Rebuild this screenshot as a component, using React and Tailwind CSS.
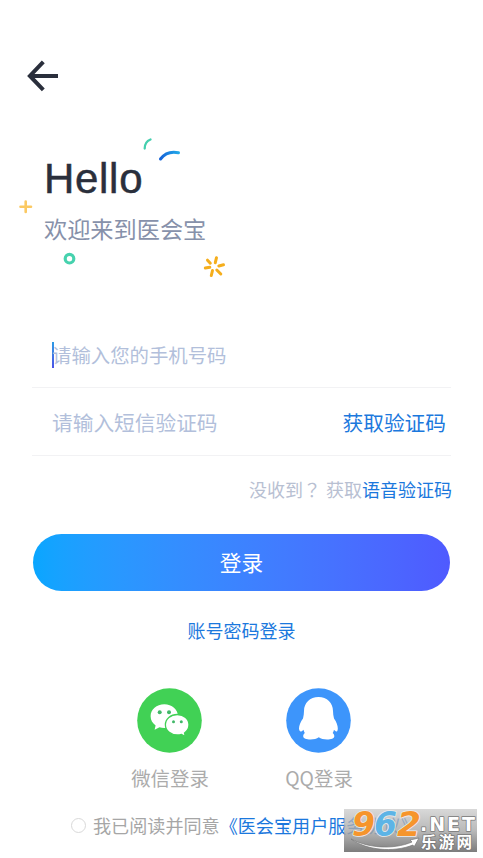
import React from "react";

const BackIcon = () => (
  <svg width="32" height="32" viewBox="0 0 32 32" fill="none" stroke="#2a2f3c" strokeWidth="4">
    <path d="M16.300 1.800 2.900 15.900l13.400 14M3 15.900H31" />
  </svg>
);

// small confetti shapes around the greeting
const Confetti = () => (
  <svg className="absolute left-0 top-0" width="240" height="160" viewBox="0 130 240 160" fill="none" strokeLinecap="round">
    <defs>
      <linearGradient id="arc" x1="160" y1="0" x2="180" y2="0" gradientUnits="userSpaceOnUse">
        <stop offset="0" stopColor="#1462d8" />
        <stop offset="1" stopColor="#22aeea" />
      </linearGradient>
    </defs>
    <path d="M144.7 148.500c0-4.500 2-7.500 5.800-9" stroke="#45cfae" strokeWidth="2.300" />
    <path d="M160.500 159c4.500-6 10-8 18-6.300" stroke="url(#arc)" strokeWidth="3" />
    <path d="M25.700 201.500v10.500M20.500 206.700h10.500" stroke="#fbc962" strokeWidth="2.600" />
    <circle cx="69.500" cy="258.700" r="4.300" stroke="#46d2ae" strokeWidth="3.200" />
    <g stroke="#f5ae1c" strokeWidth="3">
      <path d="M215.300 262.700l1.200-5M210.300 263.200l-2.800-3M218.800 266l4.700-1.200M209.800 267.300l-4.500.8M212.500 270.500l-1.200 5M216.800 270l4 4" />
    </g>
  </svg>
);

const WechatIcon = () => (
  <svg width="65" height="65" viewBox="0 0 65 65">
    <circle cx="32.500" cy="32.500" r="32.300" fill="#41d155" />
    <path d="M27.300 16.300c-7.700 0-13.700 5.300-13.700 12 0 3.800 1.900 7 5 9.200l-1 4.200 4.900-2.500c1.500.5 3.100.7 4.800.7 7.600 0 13.700-5.200 13.700-11.700s-6.100-11.900-13.700-11.900z" fill="#fff" />
    <path d="M40.300 26.500c-6.800 0-11.900 4.500-11.900 10.300s5.100 10.200 11.900 10.200c1.500 0 2.900-.2 4.200-.6l3.900 2.100-.9-3.500c2.900-2 4.500-4.800 4.500-8.200 0-5.800-5.100-10.300-11.700-10.300z" fill="#fff" stroke="#41d155" strokeWidth="1.300" />
    <g fill="#41b868">
      <circle cx="22.700" cy="24.300" r="2" />
      <circle cx="32" cy="24.300" r="2" />
      <circle cx="36.500" cy="33.700" r="1.500" />
      <circle cx="44.300" cy="33.700" r="1.500" />
    </g>
  </svg>
);

const QQIcon = () => (
  <svg width="65" height="65" viewBox="0 0 65 65">
    <circle cx="32.500" cy="32.500" r="32.300" fill="#3d95fb" />
    <path d="M32.500 9c-8.500 0-14.500 6-14.500 14 0 2.500-.4 5-1 7.500-2.500 3.500-4 7-4 10 0 1.500.8 3 1.700 3 .8 0 1.800-.8 2.800-1.800.3 1.300.7 2.400 1.300 3.400-1.100.9-1.600 2-1.600 3.200 0 2.300 3.300 3.200 7.300 3.200 3.300 0 6.300-.5 8.300-2.200 2 1.700 5 2.200 8.300 2.200 4 0 7.200-.9 7.200-3.200 0-1.200-.5-2.300-1.600-3.200.6-1 1-2.100 1.300-3.400 1 1 1.900 1.800 2.600 1.800.8 0 1.200-1.500 1.200-3 0-3-1.300-6.500-3.800-10-.6-2.500-1-5-1-7.500 0-8-6-14-14.500-14z" fill="#fff" />
  </svg>
);

const Watermark = () => (
  <div className="absolute left-[344px] top-[809px] h-[43px] w-[133px] bg-linear-to-b from-[#c8c8c8]/70 via-[#a8a8a8]/80 to-[#7d7d7d]">
    <svg className="block" width="133" height="43" viewBox="0 0 133 43">
      <g fontFamily="DejaVu Sans, sans-serif" fontWeight="700" fontStyle="italic" fontSize="33" strokeLinejoin="round" stroke="#ececec" strokeWidth="1.600" paintOrder="stroke">
        <text x="8" y="27" textLength="23" lengthAdjust="spacingAndGlyphs" fill="#f6952c">9</text>
        <text x="30" y="27" textLength="23" lengthAdjust="spacingAndGlyphs" fill="#5db4e6">6</text>
        <text x="53" y="27" textLength="24" lengthAdjust="spacingAndGlyphs" fill="#f6952c">2</text>
      </g>
      <path d="M7 30c17 9 42 11 61 3l-2-2 9-2-5 9-1-2C49 44 22 41 7 30z" fill="#fff" stroke="#777" strokeWidth=".7" />
      <g fill="#fff" stroke="#777" strokeWidth="1.500" paintOrder="stroke" strokeLinejoin="round" fontWeight="700">
        <text x="76" y="22" textLength="55" fontFamily="DejaVu Sans, sans-serif" fontSize="19">.NET</text>
        <text x="77" y="38.500" textLength="51" fontFamily="Noto Sans CJK SC, sans-serif" fontSize="15.500">乐游网</text>
      </g>
    </svg>
  </div>
);

const App = () => {
  return (
    <div className="relative h-[858px] w-[483px] overflow-hidden bg-white font-['Noto_Sans_CJK_SC',sans-serif]">
      {/* Top bar */}
      <header className="flex h-[130px] items-start pl-[27px] pt-[60px]">
        <button type="button"><BackIcon /></button>
      </header>

      {/* Greeting */}
      <section className="relative h-[190px] pl-11 pt-[22px]">
        <Confetti />
        <h1 className="h-[59px] font-['Liberation_Sans',sans-serif] text-[42px] leading-[54px] tracking-[0.7px] text-[#2a2f3c] [-webkit-text-stroke:0.5px_#2a2f3c]">Hello</h1>
        <p className="text-[23.200px] leading-[34px] text-[#8791aa]">欢迎来到医会宝</p>
      </section>

      {/* Login form */}
      <main className="mx-8">
        <div className="flex h-[68px] items-center border-b border-[#f2f2f4] pl-5 pt-[2px]">
          <span className="h-[26px] w-[2px] bg-linear-to-b from-[#2b9be5] to-[#4b52e6]" />
          <span className="-ml-[2px] text-[19.400px] leading-7 text-[#b2bfdb]">请输入您的手机号码</span>
        </div>
        <div className="flex h-[68px] items-center justify-between border-b border-[#f2f2f4] pl-5 pr-[5px] pt-px">
          <span className="text-[20.700px] leading-7 text-[#b2bfdb]">请输入短信验证码</span>
          <button type="button" className="text-[20.700px] leading-7 text-[#1b78dd]">获取验证码</button>
        </div>
        <p className="-mr-px flex h-[78px] justify-end pt-[19px] text-[18px] leading-7 text-[#b8c0d2]">
          <span className="mr-[5px]">没收到<span className="font-['Noto_Sans_CJK_TC',sans-serif]" lang="zh-TW">？</span></span>
          <span>获取</span>
          <span className="text-[#1b78dd]">语音验证码</span>
        </p>
        <button type="button" className="ml-px flex h-[57px] w-[417px] items-center justify-center rounded-full bg-linear-to-r from-[#08a6ff] to-[#4f5aff] text-[21.700px] text-white">
          登录
        </button>
        <div className="flex h-[97px] justify-center pt-[25px] text-[18px] leading-7 text-[#1b78dd]">账号密码登录</div>
      </main>

      {/* Third party login */}
      <div className="flex h-[121px] gap-[69px] pl-[130px] text-[19.400px] leading-7 text-[#ababab]">
        <div className="flex w-20 flex-col items-center gap-[11px]">
          <span className="-ml-px"><WechatIcon /></span>
          微信登录
        </div>
        <div className="flex w-20 flex-col items-center gap-[11px]">
          <span className="-ml-px"><QQIcon /></span>
          QQ登录
        </div>
      </div>

      {/* Agreement */}
      <div className="flex items-center whitespace-nowrap pl-[71px] text-[18.100px] leading-8 text-[#a6a6a6]">
        <span className="mr-[7px] size-[15px] rounded-full border border-[#d9d9d9]" />
        <span>我已阅读并同意</span>
        <span className="text-[#1b78dd]">《医会宝用户服务协议》</span>
      </div>
      <Watermark />
    </div>
  );
};

export default App;
